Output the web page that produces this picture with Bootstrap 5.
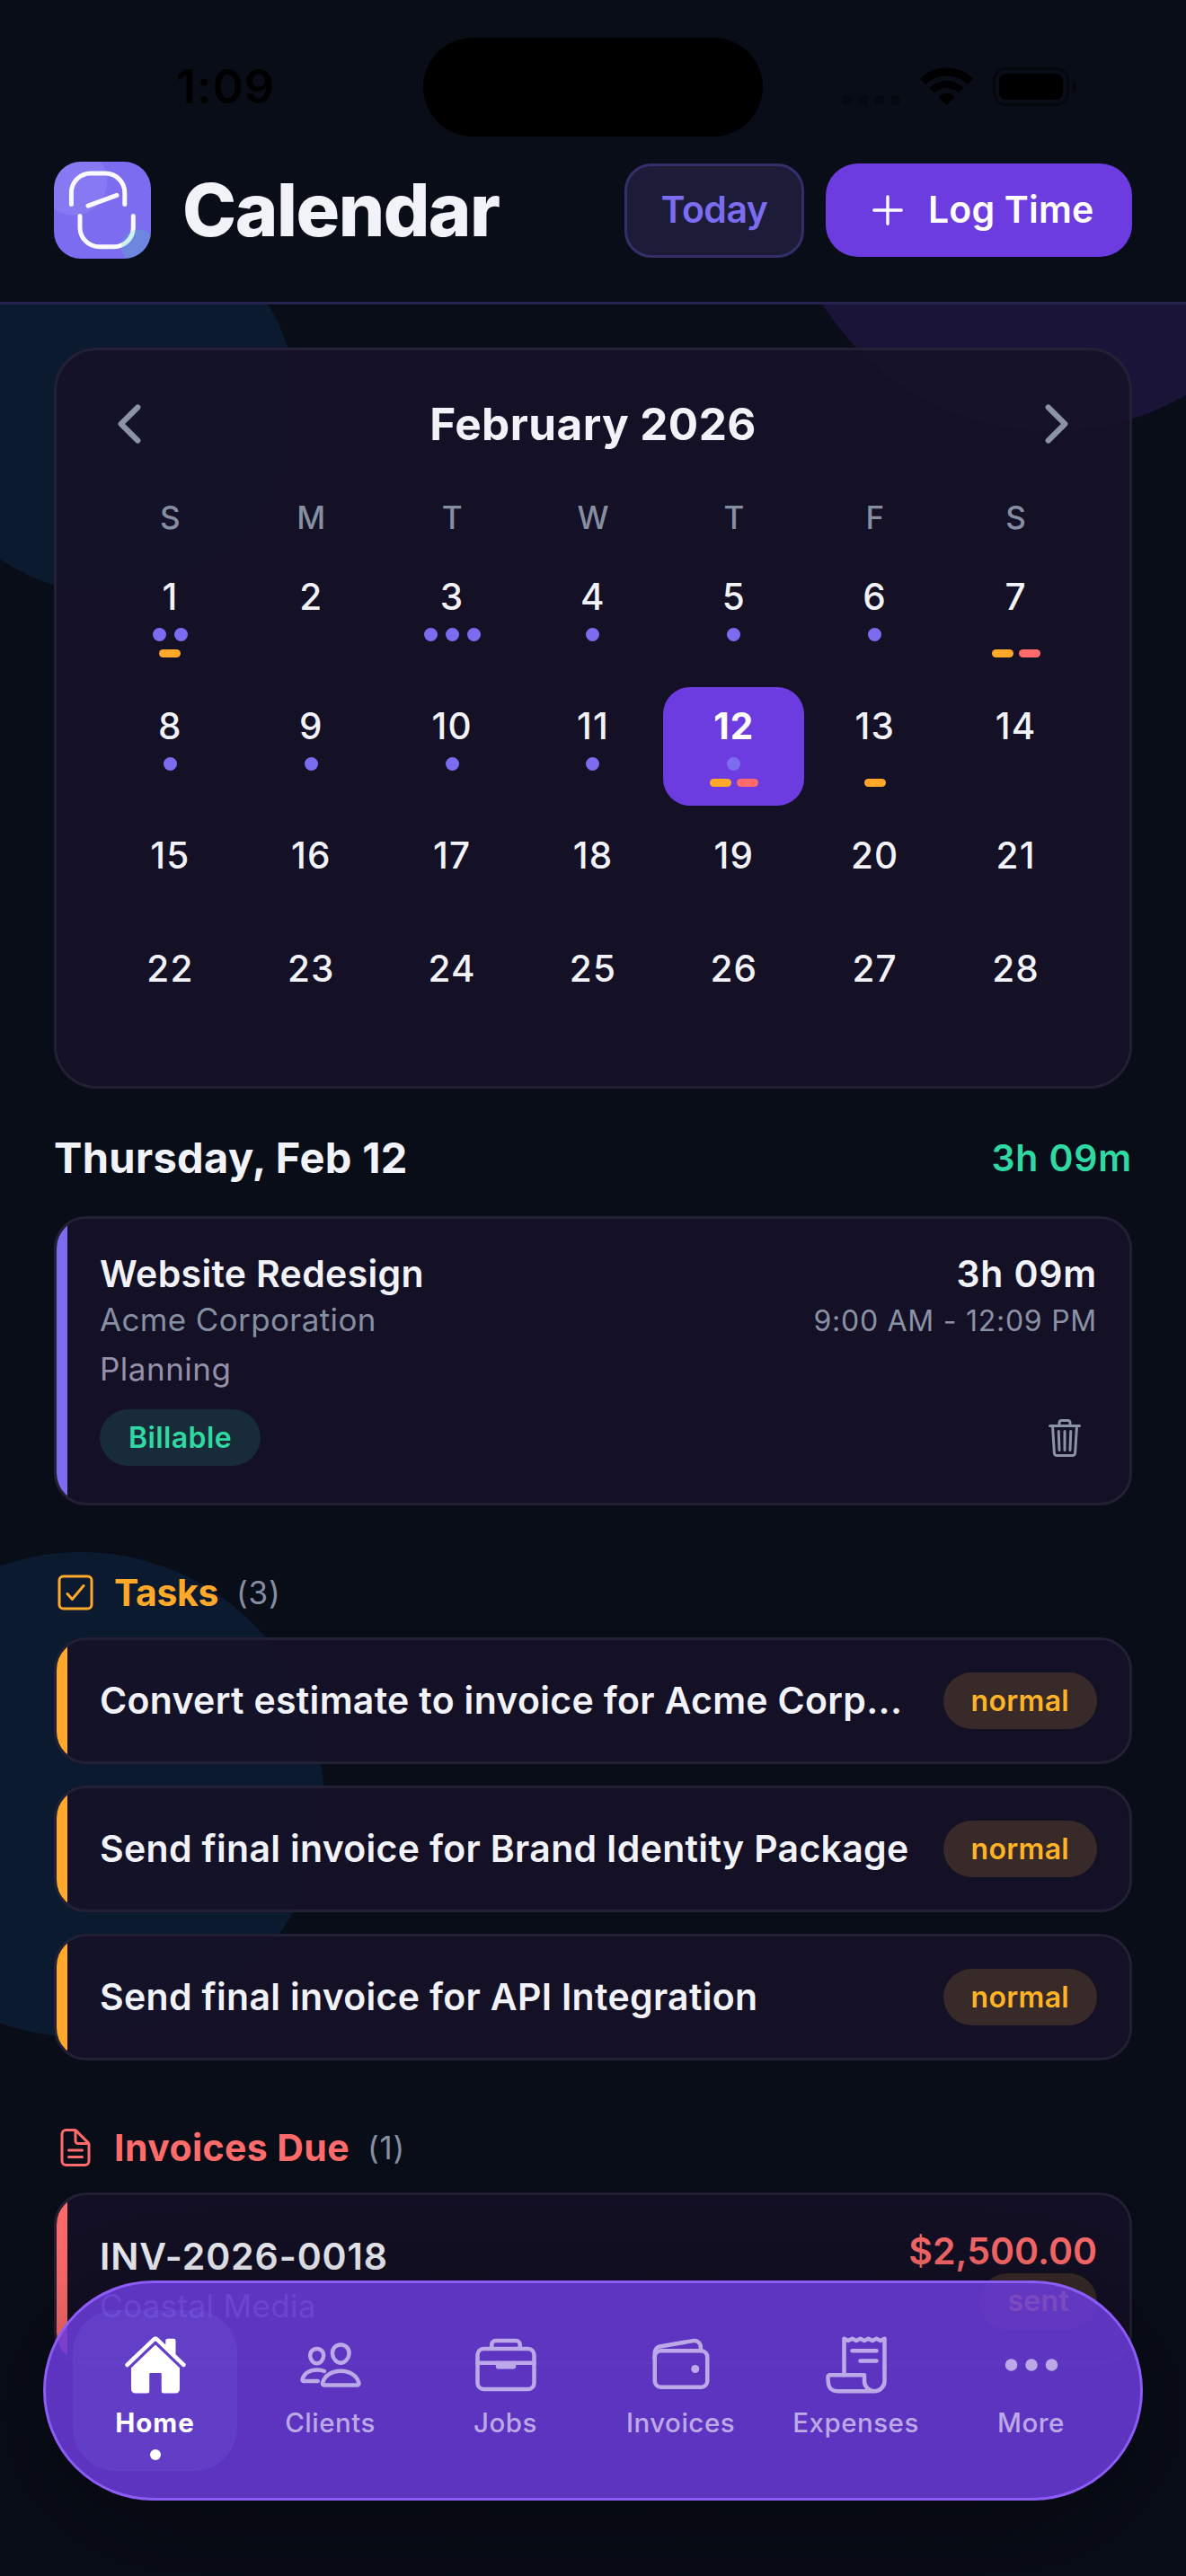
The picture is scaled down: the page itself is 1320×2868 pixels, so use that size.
<!DOCTYPE html>
<html lang="en" data-bs-theme="dark">
<head>
<meta charset="utf-8">
<meta name="viewport" content="width=device-width, initial-scale=1">
<title>Calendar</title>
<link href="https://cdn.jsdelivr.net/npm/bootstrap@5.3.0/dist/css/bootstrap.min.css" rel="stylesheet">
<style>
  :root { --violet:#7c6cf0; --purple:#6d3ce0; --amber:#ffa829; --coral:#ff6b6b; --mint:#30d9a3; --muted:#868fa2; --ink:#f2f3f9; }
  body { background: #090d18; color: var(--ink); font-family: Inter, "Liberation Sans", sans-serif; letter-spacing: .4px; }
  .screen { position: relative; height: 2868px; overflow: hidden; }
  svg { display: block; flex: none; }
  .line-icon { fill: none; stroke: currentColor; stroke-width: 32; stroke-linecap: round; stroke-linejoin: round; }
  .line-icon.bold { stroke-width: 48; }

  /* decorative background circles */
  .backdrop { position: absolute; left: 0; top: 0; }

  /* header */
  .top-area { position: relative; height: 339px; background: #090d18; border-bottom: 3px solid #26234f; }
  .status { height: 180px; padding-top: 14px; display: grid; grid-template-columns: 471px 378px 471px; align-items: center; color: #000; }
  .status-clock { padding-left: 196px; font-size: 52px; font-weight: 600; letter-spacing: 1px; line-height: 60px; }
  .island { height: 110px; border-radius: 56px; background: #000; }
  .status-icons { margin-left: 86px; }
  .title-row { height: 108px; padding: 0 60px; }
  .page-title { margin: 0 0 0 35px; color: var(--ink); font-size: 81px; font-weight: 800; letter-spacing: -1.46px; line-height: 108px; }
  .btn-today { height: 105px; width: 200px; padding: 0; border: 3px solid #342f68; border-radius: 30px; background: #1c1b38; color: var(--violet); font-size: 41px; font-weight: 600; letter-spacing: -.5px; }
  .btn-log { height: 104px; width: 341px; padding: 0 0 0 42px; gap: 18px; border: 0; border-radius: 36px; background: var(--purple); color: #fff; font-size: 41px; font-weight: 600; letter-spacing: .17px; }

  main { position: relative; padding: 48px 60px 0; }
  .panel { border: 3px solid #232036; background: rgba(22,18,40,.85); background-clip: padding-box; }

  /* calendar */
  .month { height: 825px; border-radius: 48px; padding: 48px; }
  .month-head { height: 68px; margin-bottom: 48px; color: #8b93a7; }
  .month-name { font-size: 49.5px; font-weight: 700; letter-spacing: .4px; color: var(--ink); }
  .week { display: grid; grid-template-columns: repeat(7, 1fr); text-align: center; }
  .week-names { height: 44px; line-height: 44px; margin-bottom: 23px; font-size: 35px; font-weight: 500; color: var(--muted); letter-spacing: 0; }
  .day { min-height: 114px; margin-bottom: 12px; padding: 18px 0 21px; border-radius: 30px; font-size: 40.5px; font-weight: 500; line-height: 51px; letter-spacing: 1.2px; }
  .day-on { background: var(--purple); color: #fff; font-weight: 700; }
  .dots { height: 15px; margin: 9px 0; display: flex; gap: 9px; justify-content: center; }
  .dots i { width: 15px; height: 15px; border-radius: 50%; background: var(--violet); }
  .bars { height: 9px; display: flex; gap: 6px; justify-content: center; }
  .bars i { width: 24px; height: 9px; border-radius: 4.5px; background: var(--amber); }
  .bars i.due { background: var(--coral); }

  .date-row { height: 60px; margin: 47px 0 35px; }
  .date-name { margin: 0; color: var(--ink); font-size: 47px; font-weight: 700; letter-spacing: .35px; }
  .hours { font-size: 41px; font-weight: 600; letter-spacing: .8px; line-height: 57px; }
  .hours-total { color: var(--mint); }

  /* list items */
  .item { border-radius: 36px; overflow: hidden; display: flex; }
  .item-edge { width: 12px; flex: none; }
  .edge-violet { background: var(--violet); }
  .edge-amber { background: var(--amber); }
  .edge-coral { background: var(--coral); }
  .item-body { flex: 1; min-width: 0; padding: 0 36px; }
  .item-title { font-size: 41px; font-weight: 600; letter-spacing: .32px; line-height: 57px; }
  .item-sub { font-size: 35px; color: var(--muted); line-height: 45px; letter-spacing: .35px; }
  .item-note { margin: 8px 0 22px; font-size: 35px; color: #9690a9; line-height: 45px; letter-spacing: .5px; }
  .item-time { font-size: 32px; color: #8b92a5; line-height: 47px; letter-spacing: .74px; }
  .trash { margin-right: 12px; color: #8b93a7; }
  .pill { height: 63px; border-radius: 32px; padding: 0 32px; display: inline-flex; align-items: center; font-size: 32px; font-weight: 600; letter-spacing: .4px; }
  .pill-ok { background: #182b38; color: var(--mint); }
  .pill-warn { padding: 0 31px; letter-spacing: .3px; background: #382a29; color: #ffb327; }
  .entry { height: 322px; }
  .entry .item-body { padding-top: 33px; }
  .task { height: 141px; margin-bottom: 24px; }
  .task-title { font-size: 41px; font-weight: 600; letter-spacing: .31px; line-height: 57px; white-space: nowrap; }
  .invoice { height: 192px; }
  .invoice-no { margin-bottom: 4px; letter-spacing: .9px; }
  .amount { font-size: 41px; font-weight: 600; letter-spacing: 0; line-height: 50px; color: var(--coral); }
  .group-head { height: 48px; margin: 73px 0 26px; }
  .group-tasks { color: var(--amber); }
  .group-due { color: var(--coral); }
  .group-name { margin: 0 0 0 19px; color: inherit; font-size: 41px; font-weight: 700; line-height: 48px; }
  .group-tasks .group-name { letter-spacing: -.38px; }
  .group-count { margin-left: 20px; font-size: 35px; color: var(--muted); letter-spacing: .8px; }

  /* floating tab bar */
  .tabs-bar { position: absolute; left: 48px; right: 48px; bottom: 84px; height: 245px; padding: 30px 24px 0; border: 3px solid #8b5cf6; border-radius: 123px; background: rgba(105,58,214,.88); box-shadow: 0 24px 144px rgba(0,0,0,.4); display: flex; }
  .tab { flex: 1; margin: 0 6px; height: 179px; padding-top: 25px; display: flex; flex-direction: column; align-items: center; border-radius: 48px; color: #bca9e8; font-size: 29.5px; font-weight: 500; line-height: 36px; letter-spacing: .5px; text-decoration: none; }
  .tab span { margin-top: 10px; }
  .tab-on { background: rgba(140,140,255,.12); color: #fff; font-weight: 700; letter-spacing: 1px; }
  .tab-on::after { content: ""; width: 12px; height: 12px; margin-top: 12px; border-radius: 50%; background: #fff; }
</style>
</head>
<body>
<div class="screen">
<svg class="backdrop" width="1320" height="2868" viewBox="0 0 1320 2868" aria-hidden="true">
  <circle cx="120" cy="450" r="210" fill="#0b1a2e"/>
  <circle cx="1170" cy="180" r="300" fill="#1a1538"/>
  <circle cx="90" cy="1998" r="270" fill="#0b1a2e"/>
</svg>

<header class="top-area">
  <div class="status">
    <div class="status-clock">1:09</div>
    <div class="island"></div>
    <svg class="status-icons" width="270" height="50" viewBox="935 72 270 50">
      <g fill="#070911"><rect x="937" y="106" width="11" height="11" rx="4"/><rect x="955" y="106" width="11" height="11" rx="4"/><rect x="973" y="106" width="11" height="11" rx="4"/><rect x="991" y="106" width="11" height="11" rx="4"/></g>
      <g fill="none" stroke="#000"><path stroke-width="9" d="M1027.200 90.700A37.500 37.500 0 0 1 1079.800 90.700"/><path stroke-width="8" d="M1037.200 100.700A23.300 23.300 0 0 1 1069.800 100.700"/></g>
      <path d="M1053.500 117.200L1044.500 108.200Q1053.500 99.500 1062.500 108.200Z"/>
      <rect x="1106.500" y="76.500" width="82" height="40" rx="13" fill="none" stroke="#05070d" stroke-width="3"/>
      <rect x="1112" y="82" width="71" height="29" rx="8"/>
      <path d="M1193 89.500Q1198 91 1198 96.500T1193 103.500Z" fill="#05070d"/>
    </svg>
  </div>
  <div class="title-row d-flex align-items-center">
    <svg width="108" height="108" viewBox="0 0 108 108">
      <defs><clipPath id="tile"><rect width="108" height="108" rx="30"/></clipPath></defs>
      <g clip-path="url(#tile)">
        <rect width="108" height="108" fill="#7c6cf0"/>
        <circle cx="22" cy="22" r="37.500" fill="#fff" fill-opacity=".09"/>
        <g fill="none" stroke="#faf9ff" stroke-width="5" stroke-linecap="round"><path d="M19.400 47.500V34.500A21.500 21.500 0 0 1 41 13H57.500A21.500 21.500 0 0 1 78.800 34.500V47.500"/><path d="M29 60.500V73.500A21.500 21.500 0 0 0 50.500 94.700H67A21.500 21.500 0 0 0 88.300 73.500V60.500"/><path d="M38 49.200L70 37.300"/></g>
        <circle cx="94.600" cy="95" r="19.500" fill="#3fd8b0" fill-opacity=".24"/>
      </g>
    </svg>
    <h1 class="page-title">Calendar</h1>
    <div class="d-flex align-items-center ms-auto gap-4">
      <button class="btn btn-today" type="button">Today</button>
      <button class="btn btn-log d-flex align-items-center" type="button">
        <svg class="line-icon" width="54" height="54" viewBox="0 0 512 512"><path d="M256 112v288M400 256H112"/></svg>
        <span>Log Time</span>
      </button>
    </div>
  </div>
</header>

<main>
  <section class="panel month">
    <div class="month-head d-flex align-items-center justify-content-between">
      <svg class="line-icon bold" width="66" height="66" viewBox="0 0 512 512"><path d="M328 112L184 256l144 144"/></svg>
      <div class="month-name">February 2026</div>
      <svg class="line-icon bold" width="66" height="66" viewBox="0 0 512 512"><path d="M184 112l144 144-144 144"/></svg>
    </div>
    <div class="week week-names"><div>S</div><div>M</div><div>T</div><div>W</div><div>T</div><div>F</div><div>S</div></div>
    <div class="week">
      <div class="day">1<div class="dots"><i></i><i></i></div><div class="bars"><i></i></div></div>
      <div class="day">2</div>
      <div class="day">3<div class="dots"><i></i><i></i><i></i></div></div>
      <div class="day">4<div class="dots"><i></i></div></div>
      <div class="day">5<div class="dots"><i></i></div></div>
      <div class="day">6<div class="dots"><i></i></div></div>
      <div class="day">7<div class="dots"></div><div class="bars"><i></i><i class="due"></i></div></div>
    </div>
    <div class="week">
      <div class="day">8<div class="dots"><i></i></div></div>
      <div class="day">9<div class="dots"><i></i></div></div>
      <div class="day">10<div class="dots"><i></i></div></div>
      <div class="day">11<div class="dots"><i></i></div></div>
      <div class="day day-on">12<div class="dots"><i></i></div><div class="bars"><i></i><i class="due"></i></div></div>
      <div class="day">13<div class="dots"></div><div class="bars"><i></i></div></div>
      <div class="day">14</div>
    </div>
    <div class="week"><div class="day">15</div><div class="day">16</div><div class="day">17</div><div class="day">18</div><div class="day">19</div><div class="day">20</div><div class="day">21</div></div>
    <div class="week"><div class="day">22</div><div class="day">23</div><div class="day">24</div><div class="day">25</div><div class="day">26</div><div class="day">27</div><div class="day">28</div></div>
  </section>

  <div class="date-row d-flex align-items-center justify-content-between">
    <h2 class="date-name">Thursday, Feb 12</h2>
    <div class="hours hours-total">3h 09m</div>
  </div>

  <article class="panel item entry">
    <div class="item-edge edge-violet"></div>
    <div class="item-body">
      <div class="d-flex justify-content-between">
        <div><div class="item-title">Website Redesign</div><div class="item-sub">Acme Corporation</div></div>
        <div class="text-end"><div class="hours">3h 09m</div><div class="item-time">9:00 AM - 12:09 PM</div></div>
      </div>
      <div class="item-note">Planning</div>
      <div class="d-flex align-items-center justify-content-between">
        <span class="pill pill-ok">Billable</span>
        <svg class="line-icon trash" width="48" height="48" viewBox="0 0 512 512"><path d="M112 112l20 320c.95 18.490 14.400 32 32 32h184c17.670 0 30.870-13.510 32-32l20-320M80 112h352M192 112V72a23.930 23.930 0 0 1 24-24h80a23.930 23.930 0 0 1 24 24v40M256 176v224M184 176l8 224M328 176l-8 224"/></svg>
      </div>
    </div>
  </article>

  <div class="group-head group-tasks d-flex align-items-center">
    <svg class="line-icon" width="48" height="48" viewBox="0 0 512 512"><rect x="64" y="64" width="384" height="384" rx="48"/><path d="M352 176L217.600 336 160 272"/></svg>
    <h3 class="group-name">Tasks</h3><span class="group-count">(3)</span>
  </div>
  <article class="panel item task">
    <div class="item-edge edge-amber"></div>
    <div class="item-body d-flex align-items-center justify-content-between">
      <div class="task-title">Convert estimate to invoice for Acme Corp...</div><span class="pill pill-warn">normal</span>
    </div>
  </article>
  <article class="panel item task">
    <div class="item-edge edge-amber"></div>
    <div class="item-body d-flex align-items-center justify-content-between">
      <div class="task-title">Send final invoice for Brand Identity Package</div><span class="pill pill-warn">normal</span>
    </div>
  </article>
  <article class="panel item task">
    <div class="item-edge edge-amber"></div>
    <div class="item-body d-flex align-items-center justify-content-between">
      <div class="task-title">Send final invoice for API Integration</div><span class="pill pill-warn">normal</span>
    </div>
  </article>

  <div class="group-head group-due d-flex align-items-center">
    <svg class="line-icon" width="48" height="48" viewBox="0 0 512 512"><path d="M416 221.250V416a48 48 0 0 1-48 48H144a48 48 0 0 1-48-48V96a48 48 0 0 1 48-48h98.750a32 32 0 0 1 22.620 9.370l141.260 141.260a32 32 0 0 1 9.370 22.620zM256 56v120a32 32 0 0 0 32 32h120M176 288h160M176 368h160"/></svg>
    <h3 class="group-name">Invoices Due</h3><span class="group-count">(1)</span>
  </div>
  <article class="panel item invoice">
    <div class="item-edge edge-coral"></div>
    <div class="item-body d-flex align-items-center justify-content-between">
      <div><div class="item-title invoice-no">INV-2026-0018</div><div class="item-sub">Coastal Media</div></div>
      <div class="d-flex flex-column align-items-end"><div class="amount">$2,500.00</div><span class="pill pill-warn">sent</span></div>
    </div>
  </article>
</main>

<nav class="tabs-bar">
  <a class="tab tab-on" href="#"><svg width="72" height="72" viewBox="0 0 512 512" fill="currentColor"><path d="M261.560 101.280a8 8 0 0 0-11.060 0L66.400 277.150a8 8 0 0 0-2.470 5.790L63.900 448a32 32 0 0 0 32 32H192a16 16 0 0 0 16-16V328a8 8 0 0 1 8-8h80a8 8 0 0 1 8 8v136a16 16 0 0 0 16 16h96.060a32 32 0 0 0 32-32V282.940a8 8 0 0 0-2.470-5.790z"/><path d="M490.910 244.150l-74.800-71.560V64a16 16 0 0 0-16-16h-48a16 16 0 0 0-16 16v32l-57.920-55.380C272.770 35.140 264.710 32 256 32c-8.680 0-16.720 3.140-22.140 8.630l-212.700 203.500c-6.220 6-7 15.870-1.340 22.370A16 16 0 0 0 43 267.560L250.500 69.280a8 8 0 0 1 11.060 0l207.520 198.280a16 16 0 0 0 22.590-.44c6.140-6.360 5.630-16.860-.76-22.970z"/></svg><span>Home</span></a>
  <a class="tab" href="#"><svg class="line-icon" width="72" height="72" viewBox="0 0 512 512"><path d="M402 168c-2.930 40.670-33.100 72-66 72s-63.120-31.320-66-72c-3-42.310 26.370-72 66-72s69 30.460 66 72z"/><path d="M336 304c-65.170 0-127.840 32.370-143.540 95.410-2.080 8.340 3.150 16.590 11.720 16.590h263.650c8.570 0 13.770-8.250 11.720-16.590C463.850 335.360 401.180 304 336 304z"/><path d="M200 185.940c-2.340 32.480-26.720 58.060-53 58.060s-50.700-25.570-53-58.060C91.610 152.150 115.340 128 147 128s55.390 24.770 53 57.940z"/><path d="M206 306c-18.050-8.270-37.930-11.450-59-11.450-52 0-102.100 25.850-114.650 76.200-1.650 6.660 2.530 13.250 9.370 13.250H154"/></svg><span>Clients</span></a>
  <a class="tab" href="#"><svg class="line-icon" width="72" height="72" viewBox="0 0 512 512"><rect x="32" y="128" width="448" height="320" rx="48"/><path d="M144 128V96a32 32 0 0 1 32-32h160a32 32 0 0 1 32 32v32M480 240H32"/><path d="M320 240v24a8 8 0 0 1-8 8H200a8 8 0 0 1-8-8v-24" fill="currentColor"/></svg><span>Jobs</span></a>
  <a class="tab" href="#"><svg class="line-icon" width="72" height="72" viewBox="0 0 512 512"><rect x="48" y="144" width="416" height="288" rx="48"/><path d="M411.360 144v-30A50 50 0 0 0 352 64.900L88.640 109.850A50 50 0 0 0 48 159v49"/><circle cx="368" cy="288" r="32" fill="currentColor" stroke="none"/></svg><span>Invoices</span></a>
  <a class="tab" href="#"><svg class="line-icon" width="72" height="72" viewBox="0 0 512 512"><path d="M160 336V48l32 16 32-16 31.940 16 32.370-16L320 64l31.790-16 31.930 16L416 48l32.010 16L480 48v224"/><path d="M480 272v112a80 80 0 0 1-80 80 80 80 0 0 1-80-80v-48H48a15.860 15.860 0 0 0-16 16c0 64 6.740 112 80 112h288M224 144h192M288 224h128"/></svg><span>Expenses</span></a>
  <a class="tab" href="#"><svg width="72" height="72" viewBox="0 0 512 512" fill="currentColor"><circle cx="96" cy="256" r="48"/><circle cx="256" cy="256" r="48"/><circle cx="416" cy="256" r="48"/></svg><span>More</span></a>
</nav>
</div>
<script src="https://cdn.jsdelivr.net/npm/bootstrap@5.3.0/dist/js/bootstrap.bundle.min.js"></script>
</body>
</html>
